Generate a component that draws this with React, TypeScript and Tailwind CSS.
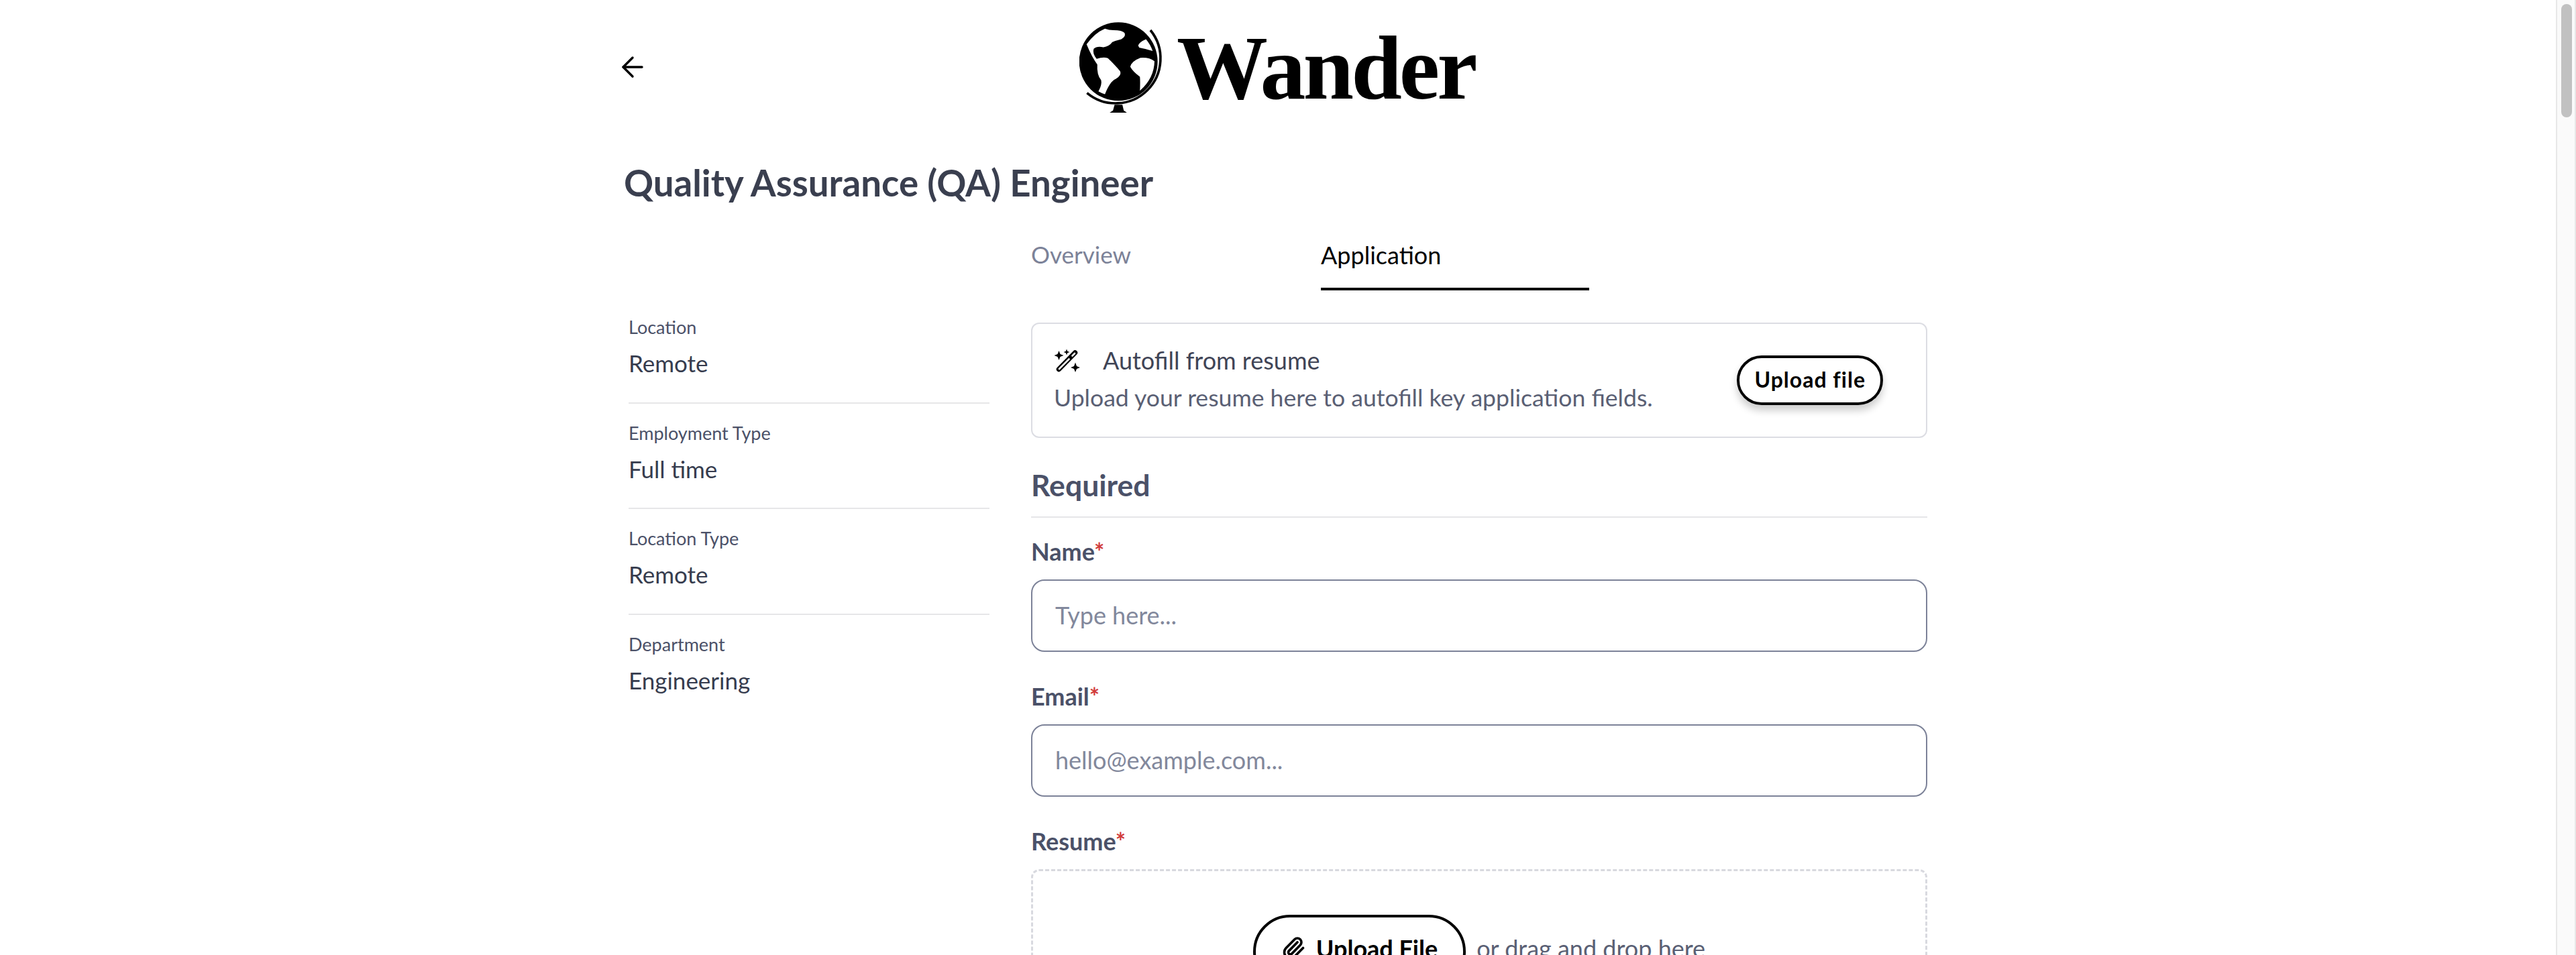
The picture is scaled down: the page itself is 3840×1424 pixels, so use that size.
import React from 'react';
import { ArrowLeft, Paperclip } from 'lucide-react';

const details = [
  { label: 'Location', value: 'Remote' },
  { label: 'Employment Type', value: 'Full time' },
  { label: 'Location Type', value: 'Remote' },
  { label: 'Department', value: 'Engineering' },
];

const Globe = () => (
  <svg viewBox="148 36 380 410" className="w-[127px] h-[137px] shrink-0" aria-hidden="true">
    <circle cx="322" cy="212" r="175" fill="#000" />
    <path
      d="M180 135 Q215 85 262 65 Q280 72 300 72 Q340 72 350 85 Q356 102 335 112 Q310 118 295 125 Q280 145 255 148 Q225 142 212 155 Q205 175 225 200 Q255 190 275 197 Q300 220 330 255 Q338 272 310 290 Q285 300 262 358 Q245 352 233 345 Q250 315 245 295 Q225 270 228 225 Q205 195 180 135Z"
      fill="#fff"
    />
    <path d="M410 140 Q415 125 445 112 Q465 135 475 165 Q440 155 415 150Z" fill="#fff" />
    <path d="M375 235 Q380 210 420 195 Q460 192 483 210 Q482 285 418 342 Q420 300 418 280 Q385 255 375 235Z" fill="#fff" />
    <path d="M465 72 A200 200 0 0 1 182 352" fill="none" stroke="#000" strokeWidth="11" />
    <path d="M305 405 H340 L346 430 L360 440 H283 L298 430Z" fill="#000" />
  </svg>
);

const WandIcon = () => (
  <svg viewBox="10 12 40 40" className="w-10 h-10 shrink-0" fill="none" aria-hidden="true">
    <path d="M17.5 45.5 L41.5 21" stroke="#000" strokeWidth="7.5" strokeLinecap="round" />
    <path d="M18 45 L32.5 30.5" stroke="#fff" strokeWidth="2.6" strokeLinecap="round" />
    <path d="M37.5 25.5 L41 22" stroke="#fff" strokeWidth="2.6" strokeLinecap="round" />
    <path d="M17.5 18 L19.5 23 L24.5 25 L19.5 27 L17.5 32 L15.5 27 L10.5 25 L15.5 23Z" fill="#000" />
    <path d="M29 15.5 L30.2 18.8 L33.5 20 L30.2 21.2 L29 24.5 L27.8 21.2 L24.5 20 L27.8 18.8Z" fill="#000" />
    <path d="M42 35.5 L44 41 L49 43 L44 45 L42 50 L40 45 L35 43 L40 41Z" fill="#000" />
  </svg>
);

const Label = ({ text }: { text: string }) => (
  <div className="text-[36px] leading-[48px] font-bold text-[#4b5168]">
    {text}
    <span className="text-[#d13b3b]">*</span>
  </div>
);

const Field = ({ text, placeholder }: { text: string; placeholder: string }) => (
  <div className="flex flex-col gap-[18px]">
    <Label text={text} />
    <div className="h-[108px] rounded-[20px] border-2 border-[#7c8298] bg-white px-[34px] pb-[3px] flex items-center text-[36px] text-[#82889c]">
      {placeholder}
    </div>
  </div>
);

const App = () => {
  return (
    <div className="flex h-[1424px] overflow-hidden bg-white font-['Lato',sans-serif]">
      <div className="flex-1 min-w-0">
        <div className="w-[1943px] ml-[930px]">
          <header className="relative h-[200px] pl-[679px] pt-[33px] flex items-start gap-[18px]">
            <ArrowLeft className="absolute left-[-11px] top-[76px] w-[48px] h-[48px] text-black" strokeWidth={1.7} />
            <Globe />
            <span className="font-['Liberation_Serif',serif] font-bold text-[136px] leading-none tracking-[-4px] text-black">
              Wander
            </span>
          </header>

          <h1 className="mt-[40px] text-[54.6px] leading-[64px] font-bold text-[#3a3f4f]">
            Quality Assurance (QA) Engineer
          </h1>

          <div className="mt-[49px] flex">
            <aside className="w-[607px] pl-[7px] shrink-0 pt-[89px]">
              {details.map((d, i) => (
                <div key={d.label} className={i > 0 ? 'h-[157.5px] border-t-2 border-[#e6e6e8] pt-[26px] w-[538px]' : 'h-[157.5px] pt-[28px] w-[538px]'}>
                  <div className="text-[27px] leading-[36px] text-[#4b5168]">{d.label}</div>
                  <div className="mt-[10px] text-[35px] leading-[50px] text-[#363c4e]">{d.value}</div>
                </div>
              ))}
            </aside>

            <main className="flex-1 min-w-0">
              <nav className="flex h-[80px] text-[36px]">
                <div className="w-[432px] text-[#7c8298] text-[35px]">Overview</div>
                <div className="w-[400px] border-b-4 border-black text-black">Application</div>
              </nav>

              <section className="mt-[48px] h-[172px] rounded-[12px] border-2 border-[#dcdde3] pl-[32px] pr-[64px] flex items-center justify-between">
                <div className="mt-[-4px]">
                  <div className="flex items-center gap-[33px] text-[36px] leading-[50px] text-[#3f4456]">
                    <WandIcon />
                    Autofill from resume
                  </div>
                  <div className="mt-[6px] text-[35.6px] leading-[50px] text-[#5a6074]">
                    Upload your resume here to autofill key application fields.
                  </div>
                </div>
                <button className="h-[74px] px-[22px] pb-[3px] rounded-full border-4 border-black bg-white text-[32px] font-bold tracking-[1px] text-black shadow-[0_8px_12px_rgba(0,0,0,0.2)]">
                  Upload file
                </button>
              </section>

              <h2 className="mt-[42px] pb-[19px] border-b-2 border-[#e6e6e8] text-[44.5px] leading-[56px] font-bold text-[#4b5168]">
                Required
              </h2>

              <div className="mt-[26px] flex flex-col gap-[42px]">
                <Field text="Name" placeholder="Type here..." />
                <Field text="Email" placeholder="hello@example.com..." />
                <div className="flex flex-col gap-[18px]">
                  <Label text="Resume" />
                  <div className="h-[240px] rounded-[12px] border-[3px] border-dashed border-[#d8d9df] pt-[65px] flex justify-center items-start gap-[16px]">
                    <button className="h-[110px] px-[38px] pb-[10px] rounded-[56px] border-4 border-black bg-white flex items-center gap-[16px] text-[36px] font-bold text-black">
                      <Paperclip className="w-[36px] h-[36px]" strokeWidth={2.4} />
                      Upload File
                    </button>
                    <div className="h-[110px] pb-[10px] flex items-center text-[36px] text-[#5a6074]">or drag and drop here</div>
                  </div>
                </div>
              </div>
            </main>
          </div>
        </div>
      </div>

      <div className="w-[30px] shrink-0 border-x-2 border-[#e8e8e8] bg-[#fafafa] pt-[6px] pl-[6px]">
        <div className="w-[16px] h-[169px] rounded-full bg-[#c1c1c1]" />
      </div>
    </div>
  );
};

export default App;
